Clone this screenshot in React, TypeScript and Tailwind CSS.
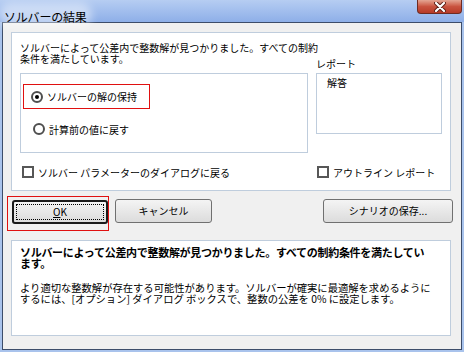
import React from 'react';

const font = "font-['Noto_Sans_CJK_JP','Noto_Sans',sans-serif]";

const Radio = ({ checked }: { checked?: boolean }) => (
  <span className="w-[12px] h-[12px] shrink-0 rounded-full border-2 border-[#4f4f4f] bg-white flex items-center justify-center">
    {checked && <span className="w-[4px] h-[4px] rounded-full bg-black" />}
  </span>
);

const Check = () => (
  <span className="w-[12px] h-[12px] shrink-0 border-2 border-[#575757] bg-white" />
);

const Button = ({ children, className = '' }: { children: React.ReactNode; className?: string }) => (
  <div
    className={`h-[24px] flex items-center justify-center rounded-[3px] border border-[#707070] bg-gradient-to-b from-[#f4f4f4] to-[#dcdcdc] text-[10px] leading-none ${className}`}
  >
    {children}
  </div>
);

export default function App() {
  return (
    <div className={`w-[464px] h-[352px] flex flex-col bg-[#a9c3ec] text-black ${font}`}>
      {/* Title bar */}
      <div className="h-[22px] flex items-start justify-between bg-gradient-to-b from-[#b6cdf2] to-[#8eafe8]">
        <div className="relative ml-[2px] mt-[3px] px-[2px]">
          <span className="absolute inset-0 -inset-x-[3px] rounded-full bg-white/45 blur-[4px]" />
          <span className="relative text-[12px] leading-[14px] tracking-[-0.2px]">ソルバーの結果</span>
        </div>
        <div className="mr-[2px] w-[45px] h-[14px] flex items-center justify-center rounded-b-[4px] border border-t-0 border-[#6e2b22] bg-gradient-to-b from-[#e3a593] via-[#c9533f] to-[#b73a27]">
          <svg width="12" height="10" viewBox="0 0 12 10">
            <path d="M2 1 L10 9 M10 1 L2 9" stroke="#5a1e15" strokeWidth="4" strokeLinecap="round" />
            <path d="M2 1 L10 9 M10 1 L2 9" stroke="#ffffff" strokeWidth="2.2" strokeLinecap="round" />
          </svg>
        </div>
      </div>

      {/* Client area */}
      <div className="mx-[2px] h-[328px] border border-[#3d4d6a] bg-[#f0f0f0] px-[8px] pt-[9px]">
        {/* Main panel */}
        <div className="w-[440px] h-[159px] border border-[#bfcddd] bg-white px-[8px] pt-[9px]">
          <div className="text-[10px] leading-[11px] whitespace-nowrap">
            <div>ソルバーによって公差内で整数解が見つかりました。すべての制約</div>
            <div>条件を満たしています。</div>
          </div>

          <div className="mt-[9px] flex gap-[8px]">
            <div className="w-[288px] h-[80px] border border-[#bfcddd] pt-[10px] pl-[2px]">
              <div className="w-[127px] h-[25px] border border-[#e01010] pl-[7px] flex items-center gap-[4px] text-[10px]">
                <Radio checked />
                <span>ソルバーの解の保持</span>
              </div>
              <div className="mt-[13px] ml-[10px] h-[14px] flex items-center gap-[4px] text-[10px]">
                <Radio />
                <span>計算前の値に戻す</span>
              </div>
            </div>
            <div className="-mt-[15px] w-[126px]">
              <div className="text-[10px] leading-[12px]">レポート</div>
              <div className="mt-[3px] h-[61px] border border-[#bfcddd] pl-[10px] pt-[3px] text-[10px] leading-[12px]">
                解答
              </div>
            </div>
          </div>

          <div className="mt-[12px] flex gap-[8px] text-[10px]">
            <div className="w-[288px] h-[14px] pl-[2px] flex items-center gap-[4px]">
              <Check />
              <span>ソルバー パラメーターのダイアログに戻る</span>
            </div>
            <div className="h-[14px] pl-[1px] flex items-center gap-[4px]">
              <Check />
              <span>アウトライン レポート</span>
            </div>
          </div>
        </div>

        {/* Buttons */}
        <div className="mt-[5px] flex items-start">
          <div className="-ml-[4px] w-[102px] h-[35px] border border-[#e01010] pl-[4px] pt-[3px]">
            <div className="w-[96px] h-[24px] rounded-[3px] border-2 border-[#1a1a1a] bg-gradient-to-b from-[#f4f4f4] to-[#dcdcdc] p-[2px]">
              <div className="h-full border border-dotted border-black flex items-center justify-center text-[10px] leading-none">
                <span><span className="underline">O</span>K</span>
              </div>
            </div>
          </div>
          <Button className="ml-[6px] mt-[3px] w-[97px]">キャンセル</Button>
          <Button className="ml-auto mt-[3px] w-[130px]">シナリオの保存...</Button>
        </div>

        {/* Message panel */}
        <div className="mt-[9px] w-[440px] h-[96px] border border-[#bfcddd] bg-white pl-[8px] pt-[6px] whitespace-nowrap">
          <div className="text-[11px] leading-[11px] font-bold tracking-[-0.3px]">
            <div>ソルバーによって公差内で整数解が見つかりました。すべての制約条件を満たしてい</div>
            <div>ます。</div>
          </div>
          <div className="mt-[13px] text-[10.3px] leading-[11px]">
            <div>より適切な整数解が存在する可能性があります。ソルバーが確実に最適解を求めるように</div>
            <div>するには、[オプション] ダイアログ ボックスで、整数の公差を 0% に設定します。</div>
          </div>
        </div>
      </div>
    </div>
  );
}
